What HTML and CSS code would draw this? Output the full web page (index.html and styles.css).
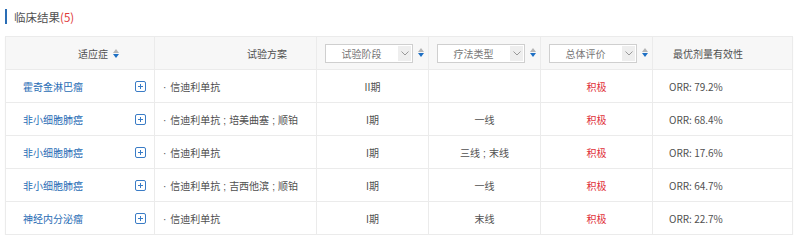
FILE: index.html
```html
<!DOCTYPE html>
<html lang="zh">
<head>
<meta charset="utf-8">
<link rel="stylesheet" href="styles.css">
</head>
<body>
<div class="page">
  <h2 class="title"><span class="bar"></span>临床结果<span class="count">(5)</span></h2>
  <table class="grid">
    <colgroup>
      <col class="c1"><col class="c2"><col class="c3"><col class="c4"><col class="c5"><col class="c6">
    </colgroup>
    <thead>
      <tr>
        <th class="h-ind">适应症<span class="sort"><i class="up"></i><i class="down"></i></span></th>
        <th class="h-plan">试验方案</th>
        <th class="h-sel"><div class="selwrap"><div class="sel"><span class="sel-t">试验阶段</span><span class="sel-a"><svg width="8" height="5" viewBox="0 0 8 5"><path d="M0.5 0.5 L4 4 L7.5 0.5" fill="none" stroke="#999" stroke-width="1"/></svg></span></div><span class="sort"><i class="up"></i><i class="down"></i></span></div></th>
        <th class="h-sel"><div class="selwrap"><div class="sel"><span class="sel-t">疗法类型</span><span class="sel-a"><svg width="8" height="5" viewBox="0 0 8 5"><path d="M0.5 0.5 L4 4 L7.5 0.5" fill="none" stroke="#999" stroke-width="1"/></svg></span></div><span class="sort"><i class="up"></i><i class="down"></i></span></div></th>
        <th class="h-sel"><div class="selwrap"><div class="sel"><span class="sel-t">总体评价</span><span class="sel-a"><svg width="8" height="5" viewBox="0 0 8 5"><path d="M0.5 0.5 L4 4 L7.5 0.5" fill="none" stroke="#999" stroke-width="1"/></svg></span></div><span class="sort"><i class="up"></i><i class="down"></i></span></div></th>
        <th class="h-eff">最优剂量有效性</th>
      </tr>
    </thead>
    <tbody>
      <tr>
        <td><div class="ind"><a class="link">霍奇金淋巴瘤</a><span class="plus"></span></div></td>
        <td class="plan"><span class="dot">·</span>信迪利单抗</td>
        <td class="ctr">II期</td>
        <td class="ctr"></td>
        <td class="ctr pos">积极</td>
        <td class="eff">ORR: 79.2%</td>
      </tr>
      <tr>
        <td><div class="ind"><a class="link">非小细胞肺癌</a><span class="plus"></span></div></td>
        <td class="plan"><span class="dot">·</span>信迪利单抗<span class="semi">;</span>培美曲塞<span class="semi">;</span>顺铂</td>
        <td class="ctr">I期</td>
        <td class="ctr">一线</td>
        <td class="ctr pos">积极</td>
        <td class="eff">ORR: 68.4%</td>
      </tr>
      <tr>
        <td><div class="ind"><a class="link">非小细胞肺癌</a><span class="plus"></span></div></td>
        <td class="plan"><span class="dot">·</span>信迪利单抗</td>
        <td class="ctr">I期</td>
        <td class="ctr">三线<span class="semi">;</span>末线</td>
        <td class="ctr pos">积极</td>
        <td class="eff">ORR: 17.6%</td>
      </tr>
      <tr>
        <td><div class="ind"><a class="link">非小细胞肺癌</a><span class="plus"></span></div></td>
        <td class="plan"><span class="dot">·</span>信迪利单抗<span class="semi">;</span>吉西他滨<span class="semi">;</span>顺铂</td>
        <td class="ctr">I期</td>
        <td class="ctr">一线</td>
        <td class="ctr pos">积极</td>
        <td class="eff">ORR: 64.7%</td>
      </tr>
      <tr>
        <td><div class="ind"><a class="link">神经内分泌瘤</a><span class="plus"></span></div></td>
        <td class="plan"><span class="dot">·</span>信迪利单抗</td>
        <td class="ctr">I期</td>
        <td class="ctr">末线</td>
        <td class="ctr pos">积极</td>
        <td class="eff">ORR: 22.7%</td>
      </tr>
    </tbody>
  </table>
</div>
</body>
</html>
```
FILE: styles.css
```css
* { box-sizing: border-box; }
html, body { margin: 0; padding: 0; background: #fff; }
body {
  font-family: "Noto Sans CJK SC", "Noto Sans", sans-serif;
  color: #505050;
  font-size: 10px;
}
.page { padding: 9px 8px 0 5px; }
.title {
  display: flex;
  align-items: center;
  margin: 0;
  height: 15px;
  font-size: 11.5px;
  font-weight: normal;
  color: #505050;
}
.title .bar {
  width: 2px;
  height: 15px;
  background: #2a6db5;
  margin-right: 7px;
}
.title .count { color: #e03a3a; }
.grid {
  margin-top: 12px;
  width: 787px;
  table-layout: fixed;
  border-collapse: collapse;
  border: 1px solid #e6e6e6;
  box-shadow: 0 1px 1px rgba(0,0,0,0.06);
}
col.c1 { width: 149px; }
col.c2 { width: 162px; }
col.c3 { width: 112px; }
col.c4 { width: 112px; }
col.c5 { width: 112px; }
col.c6 { width: 140px; }
th, td {
  border: 1px solid #ebebeb;
  padding: 0;
  vertical-align: middle;
  white-space: nowrap;
}
th {
  height: 33px;
  background: #f7f7f7;
  font-weight: normal;
  color: #505050;
  text-align: left;
  font-size: 10px;
}
td { height: 33px; }
.h-ind { padding-left: 72px; }
.h-plan { padding-left: 92px; }
.h-eff { padding-left: 20px; }
.h-sel { padding-left: 8px; }
.sort {
  display: inline-flex;
  flex-direction: column;
  gap: 1px;
  vertical-align: middle;
  margin-left: 5px;
  position: relative;
  top: -1px;
}
.sort i {
  display: block;
  width: 0; height: 0;
  border-left: 3px solid transparent;
  border-right: 3px solid transparent;
}
.sort .up { border-bottom: 4px solid #b5b5b5; }
.sort .down { border-top: 4px solid #1d6fc4; }
.selwrap { display: flex; align-items: center; }
.sel {
  display: flex;
  width: 88px;
  height: 19px;
  border: 1px solid #cfcfcf;
  background: #fff;
}
.sel-t {
  flex: 1;
  text-align: center;
  color: #777;
  line-height: 17px;
  font-size: 10px;
}
.sel-a {
  width: 13px;
  margin: 1px;
  background: #eeeeee;
  display: flex;
  align-items: center;
  justify-content: center;
}
.ind {
  display: flex;
  align-items: center;
  justify-content: space-between;
  padding: 0 8px 0 17px;
}
.link { color: #2a6db5; text-decoration: none; }
.plus {
  position: relative;
  width: 11px;
  height: 11px;
  border: 1px solid #3a7cc6;
  border-radius: 2px;
}
.plus::before, .plus::after {
  content: "";
  position: absolute;
  background: #3a7cc6;
}
.plus::before { left: 2px; right: 2px; top: 4px; height: 1px; }
.plus::after { top: 2px; bottom: 2px; left: 4px; width: 1px; }
.plan { padding-left: 8px; }
.dot { font-family: "Liberation Sans", sans-serif; margin-right: 4px; }
.semi { font-family: "Liberation Sans", sans-serif; margin: 0 3px; }
.ctr { text-align: center; }
.pos { color: #e0303a; }
.eff { padding-left: 16px; }
```
